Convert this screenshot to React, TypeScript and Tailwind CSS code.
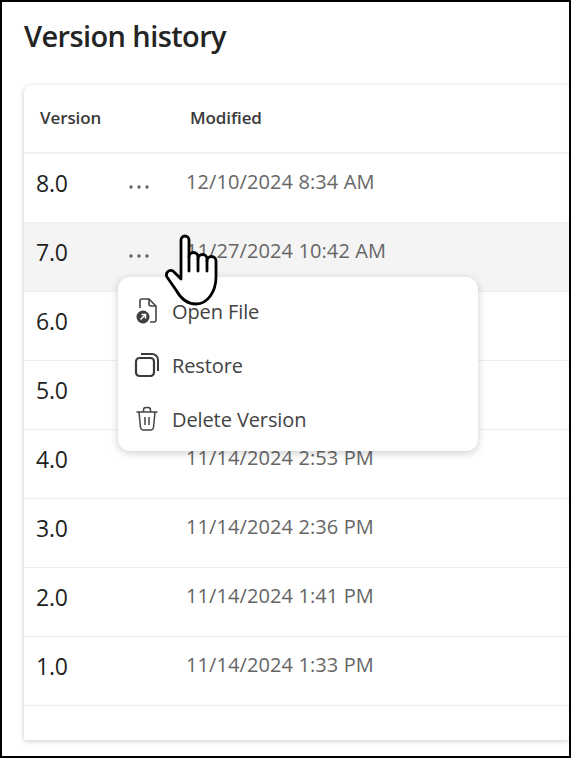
const rows = [
  { version: '8.0', modified: '12/10/2024 8:34 AM', dots: true },
  { version: '7.0', modified: '11/27/2024 10:42 AM', dots: true, hover: true },
  { version: '6.0', modified: '' },
  { version: '5.0', modified: '' },
  { version: '4.0', modified: '11/14/2024 2:53 PM' },
  { version: '3.0', modified: '11/14/2024 2:36 PM' },
  { version: '2.0', modified: '11/14/2024 1:41 PM' },
  { version: '1.0', modified: '11/14/2024 1:33 PM' },
]

function Dots() {
  return (
    <svg width="22" height="4" viewBox="0 0 22 4" fill="#616161">
      <circle cx="3" cy="2" r="1.7" />
      <circle cx="11" cy="2" r="1.7" />
      <circle cx="19" cy="2" r="1.7" />
    </svg>
  )
}

function OpenFileIcon() {
  return (
    <svg width="24" height="28" viewBox="0 0 24 28" fill="none">
      <path d="M5 11V4a2 2 0 0 1 2-2h7l7 7v14a2 2 0 0 1-2 2h-4" stroke="#444" strokeWidth="1.6" />
      <path d="M14 2v5a2 2 0 0 0 2 2h5" stroke="#444" strokeWidth="1.6" />
      <circle cx="8" cy="20" r="6.5" fill="#3f3f3f" />
      <path d="M5.500 22.500l5-5M6.500 17.500h4v4" stroke="#fff" strokeWidth="1.500" />
    </svg>
  )
}

function RestoreIcon() {
  return (
    <svg width="26" height="26" viewBox="0 0 26 26" fill="none">
      <rect x="2" y="6" width="18" height="18" rx="3.500" stroke="#3b3b3b" strokeWidth="2.200" />
      <path d="M7 2h11a6 6 0 0 1 6 6v11" stroke="#3b3b3b" strokeWidth="2" />
    </svg>
  )
}

function TrashIcon() {
  return (
    <svg width="24" height="26" viewBox="0 0 24 26" fill="none" stroke="#444" strokeWidth="1.500">
      <path d="M1.500 6h21M8.500 6V4a2.500 2.500 0 0 1 2.500-2.500h2A2.500 2.500 0 0 1 15.500 4v2" />
      <path d="M4 6l1.500 15.500a3 3 0 0 0 3 2.500h7a3 3 0 0 0 3-2.500L20 6" />
      <path d="M10 11v8M14 11v8" />
    </svg>
  )
}

function HandCursor() {
  return (
    <svg width="56" height="74" viewBox="0 0 56 74" fill="#fff" stroke="#000" strokeWidth="2.800" strokeLinejoin="round" strokeLinecap="round">
      <path d="M17 46V7a4 4 0 0 1 8 0v17a4.500 4.500 0 0 1 9 0v2a4.500 4.500 0 0 1 9 0v2a4.500 4.500 0 0 1 9 0v16c0 14-8 27-20 27-9 0-15-5-20-14L3 44c-2-4 2-8 6-6z" />
      <path d="M25 24v14M34 26v12M43 28v10" fill="none" />
    </svg>
  )
}

const menu = [
  { label: 'Open File', icon: <OpenFileIcon /> },
  { label: 'Restore', icon: <RestoreIcon /> },
  { label: 'Delete Version', icon: <TrashIcon /> },
]

export default function App() {
  return (
    <div className="relative h-[758px] w-[571px] overflow-hidden border-2 border-black bg-white font-['Open_Sans',sans-serif]">
      <h1 className="pl-[22px] pt-[15px] text-[29px] leading-[38px] font-semibold tracking-[-0.6px] text-[#242424]">
        Version history
      </h1>
      <div className="relative ml-[22px] mt-[30px] h-[655px] rounded-tl-lg bg-white shadow-[0_1px_5px_rgba(0,0,0,0.22)]">
        <div className="flex h-[69px] items-center border-b-2 border-[#f0f0f0] pb-[2px] text-[17px] font-semibold tracking-[-0.1px] text-[#3a3a3a]">
          <span className="w-[166px] pl-[16px]">Version</span>
          <span>Modified</span>
        </div>
        {rows.map((row) => (
          <div
            key={row.version}
            className={`flex h-[69px] border-b border-[#eeeeee] ${row.hover ? 'bg-[#f4f4f4]' : ''}`}
          >
            <span className="w-[104px] pl-[12px] pt-[13px] text-[23px] leading-[32px] tracking-[-0.2px] text-[#1f1f1f]">
              {row.version}
            </span>
            <span className="flex w-[58px] pt-[31px]">{row.dots && <Dots />}</span>
            <span className="pt-[14px] text-[20px] leading-[28px] tracking-[0.1px] text-[#666]">{row.modified}</span>
          </div>
        ))}
      </div>
      <div className="absolute left-[116px] top-[275px] flex h-[174px] w-[360px] flex-col justify-center rounded-xl bg-white pt-[2px] shadow-[0_2px_8px_rgba(0,0,0,0.2)]">
        {menu.map((item) => (
          <div key={item.label} className="flex h-[54px] items-center text-[20px] tracking-[-0.1px] text-[#424242]">
            <span className="flex w-[54px] justify-center pl-[4px]">{item.icon}</span>
            <span className="pt-[2px]">{item.label}</span>
          </div>
        ))}
      </div>
      <div className="absolute left-[162px] top-[231px]">
        <HandCursor />
      </div>
    </div>
  )
}
